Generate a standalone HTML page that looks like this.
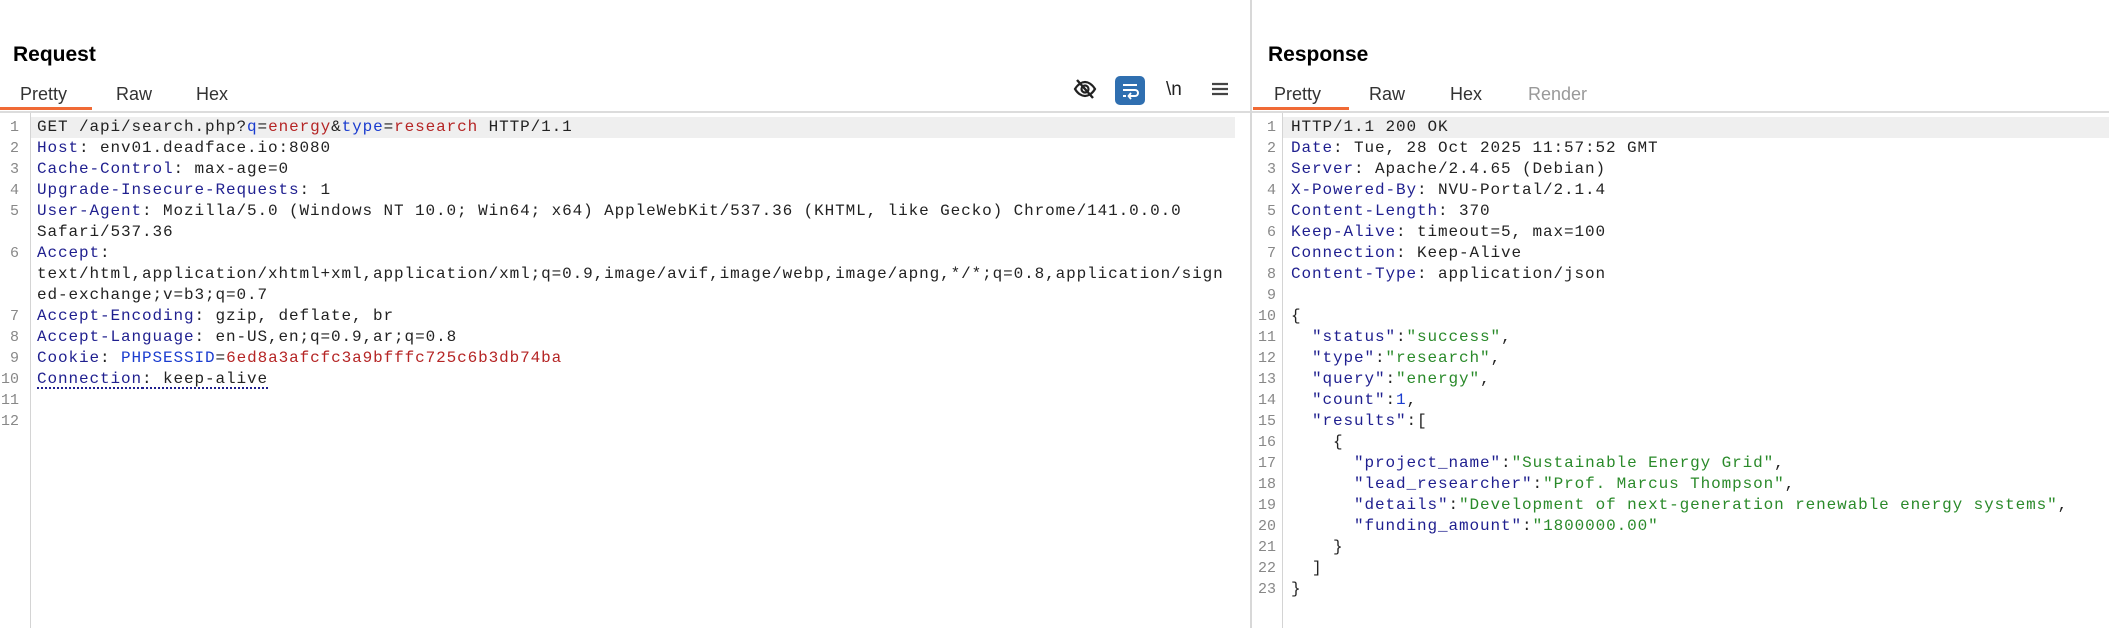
<!DOCTYPE html>
<html><head><meta charset="utf-8"><style>
*{margin:0;padding:0;box-sizing:border-box}
body{width:2109px;height:628px;background:#fff;position:relative;overflow:hidden;font-family:"Liberation Sans",sans-serif}
.title{position:absolute;top:43px;font-weight:bold;font-size:21px;color:#000}
.tab{position:absolute;top:84px;font-size:18px;color:#333}
.ul{position:absolute;top:107px;height:3px;background:#f06a35}
.hr{position:absolute;top:111px;height:2px;background:#dcdcdc}
.div{position:absolute;left:1250px;top:0;width:2px;height:628px;background:#d8d8d8}
.gut{position:absolute;top:113px;width:1px;height:515px;background:#d4d4d4}
.hl{position:absolute;top:117px;height:21px;background:#efefef}
.code{position:absolute;top:117px;font-family:"Liberation Mono",monospace;font-size:16px;letter-spacing:0.9px;line-height:21px;color:#222;white-space:pre}
.num{position:absolute;top:117px;font-family:"Liberation Mono",monospace;font-size:15px;line-height:21px;color:#888;text-align:right;white-space:pre}
.k{color:#1f1f8f}.r{color:#b52525}.b{color:#1a3ccf}.g{color:#2a8a2a}
.dot{text-decoration:underline dotted #1f1f8f 2px;text-underline-offset:4px}
</style></head><body>
<div class="div"></div>
<div class="title" style="left:13px">Request</div>
<div class="tab" style="left:20px">Pretty</div>
<div class="tab" style="left:116px">Raw</div>
<div class="tab" style="left:196px">Hex</div>
<div class="ul" style="left:0;width:92px"></div>
<div class="hr" style="left:0;width:1250px"></div>
<svg style="position:absolute;left:1072px;top:78px" width="26" height="22" viewBox="0 0 26 22"><path d="M3 11c3-5 7-7 10-7s7 2 10 7c-3 5-7 7-10 7s-7-2-10-7z" fill="none" stroke="#222" stroke-width="2.2"/><circle cx="13" cy="11" r="3.5" fill="none" stroke="#222" stroke-width="2.2"/><path d="M5 2l16 18" stroke="#222" stroke-width="2.4"/></svg>
<div style="position:absolute;left:1115px;top:76px;width:30px;height:29px;background:#2f6fb0;border-radius:5px"></div>
<svg style="position:absolute;left:1115px;top:76px" width="30" height="29" viewBox="0 0 30 29"><path d="M8 9h14M8 14h12a3 3 0 010 6h-5M8 20h3" fill="none" stroke="#fff" stroke-width="2"/><path d="M16 17l-2.5 3 2.5 3" fill="none" stroke="#fff" stroke-width="1.8"/></svg>
<div style="position:absolute;left:1166px;top:79px;font-size:19px;color:#222">\n</div>
<svg style="position:absolute;left:1211px;top:81px" width="18" height="16"><path d="M1 3h16M1 8h16M1 13h16" stroke="#444" stroke-width="2.2"/></svg>
<div class="hl" style="left:31px;width:1204px"></div>
<div class="gut" style="left:30px"></div>
<div class="num" style="left:0;width:19px">1
2
3
4
5

6


7
8
9
10
11
12</div>
<div class="code" style="left:37px">GET /api/search.php?<span class="b">q</span>=<span class="r">energy</span>&amp;<span class="b">type</span>=<span class="r">research</span> HTTP/1.1
<span class="k">Host</span>: env01.deadface.io:8080
<span class="k">Cache-Control</span>: max-age=0
<span class="k">Upgrade-Insecure-Requests</span>: 1
<span class="k">User-Agent</span>: Mozilla/5.0 (Windows NT 10.0; Win64; x64) AppleWebKit/537.36 (KHTML, like Gecko) Chrome/141.0.0.0
Safari/537.36
<span class="k">Accept</span>:
text/html,application/xhtml+xml,application/xml;q=0.9,image/avif,image/webp,image/apng,*/*;q=0.8,application/sign
ed-exchange;v=b3;q=0.7
<span class="k">Accept-Encoding</span>: gzip, deflate, br
<span class="k">Accept-Language</span>: en-US,en;q=0.9,ar;q=0.8
<span class="k">Cookie</span>: <span class="b">PHPSESSID</span>=<span class="r">6ed8a3afcfc3a9bfffc725c6b3db74ba</span>
<span class="dot"><span class="k">Connection</span>: keep-alive</span>
</div>

<div class="title" style="left:1268px">Response</div>
<div class="tab" style="left:1274px">Pretty</div>
<div class="tab" style="left:1369px">Raw</div>
<div class="tab" style="left:1450px">Hex</div>
<div class="tab" style="left:1528px;color:#999">Render</div>
<div class="ul" style="left:1253px;width:96px"></div>
<div class="hr" style="left:1252px;width:857px"></div>
<div class="hl" style="left:1283px;width:826px"></div>
<div class="gut" style="left:1282px"></div>
<div class="num" style="left:1252px;width:24px">1
2
3
4
5
6
7
8
9
10
11
12
13
14
15
16
17
18
19
20
21
22
23</div>
<div class="code" style="left:1291px">HTTP/1.1 200 OK
<span class="k">Date</span>: Tue, 28 Oct 2025 11:57:52 GMT
<span class="k">Server</span>: Apache/2.4.65 (Debian)
<span class="k">X-Powered-By</span>: NVU-Portal/2.1.4
<span class="k">Content-Length</span>: 370
<span class="k">Keep-Alive</span>: timeout=5, max=100
<span class="k">Connection</span>: Keep-Alive
<span class="k">Content-Type</span>: application/json

{
  <span class="k">"status"</span>:<span class="g">"success"</span>,
  <span class="k">"type"</span>:<span class="g">"research"</span>,
  <span class="k">"query"</span>:<span class="g">"energy"</span>,
  <span class="k">"count"</span>:<span class="b">1</span>,
  <span class="k">"results"</span>:[
    {
      <span class="k">"project_name"</span>:<span class="g">"Sustainable Energy Grid"</span>,
      <span class="k">"lead_researcher"</span>:<span class="g">"Prof. Marcus Thompson"</span>,
      <span class="k">"details"</span>:<span class="g">"Development of next-generation renewable energy systems"</span>,
      <span class="k">"funding_amount"</span>:<span class="g">"1800000.00"</span>
    }
  ]
}</div>
</body></html>
